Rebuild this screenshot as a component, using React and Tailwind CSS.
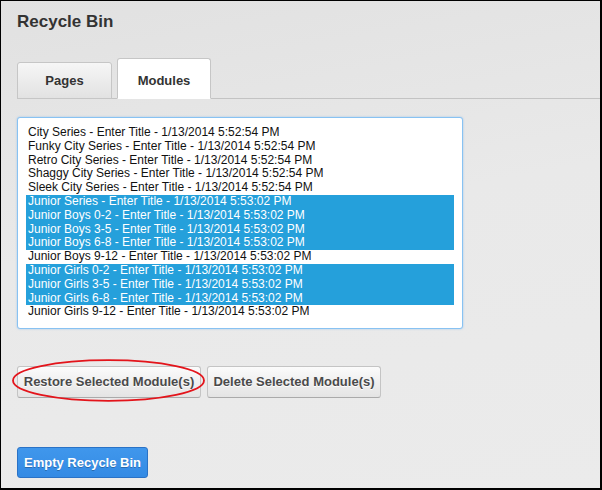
import React from "react";

const items = [
  ["City Series - Enter Title - 1/13/2014 5:52:54 PM", false],
  ["Funky City Series - Enter Title - 1/13/2014 5:52:54 PM", false],
  ["Retro City Series - Enter Title - 1/13/2014 5:52:54 PM", false],
  ["Shaggy City Series - Enter Title - 1/13/2014 5:52:54 PM", false],
  ["Sleek City Series - Enter Title - 1/13/2014 5:52:54 PM", false],
  ["Junior Series - Enter Title - 1/13/2014 5:53:02 PM", true],
  ["Junior Boys 0-2 - Enter Title - 1/13/2014 5:53:02 PM", true],
  ["Junior Boys 3-5 - Enter Title - 1/13/2014 5:53:02 PM", true],
  ["Junior Boys 6-8 - Enter Title - 1/13/2014 5:53:02 PM", true],
  ["Junior Boys 9-12 - Enter Title - 1/13/2014 5:53:02 PM", false],
  ["Junior Girls 0-2 - Enter Title - 1/13/2014 5:53:02 PM", true],
  ["Junior Girls 3-5 - Enter Title - 1/13/2014 5:53:02 PM", true],
  ["Junior Girls 6-8 - Enter Title - 1/13/2014 5:53:02 PM", true],
  ["Junior Girls 9-12 - Enter Title - 1/13/2014 5:53:02 PM", false],
];

export default function App() {
  return (
    <div
      className="relative box-border w-[602px] h-[490px] overflow-hidden border-l border-t border-r-2 border-b-2 border-black bg-[linear-gradient(170deg,#e1e1e1_0%,#e9e9e9_45%,#ebebeb_100%)] pl-[16px] font-['Liberation_Sans',Arial,sans-serif]"
    >
      <h1 className="mt-[11px] text-[17px] leading-[20px] font-bold text-[#333333]">
        Recycle Bin
      </h1>

      <div className="mt-[26px] flex h-[41px] items-end gap-[5px] border-b border-[#c3c3c3]">
        <div className="-mb-px box-border flex h-[37px] w-[95px] items-center justify-center rounded-t-[3px] border border-[#c6c6c6] bg-[linear-gradient(#f6f6f6,#e2e2e2)] text-[13px] font-bold text-[#333333]">
          Pages
        </div>
        <div className="-mb-px box-border flex h-[41px] w-[94px] items-center justify-center rounded-t-[3px] border border-b-white border-[#c6c6c6] bg-white pt-[4px] text-[13px] font-bold text-[#333333]">
          Modules
        </div>
      </div>

      <div className="mt-[18px] box-border h-[212px] w-[446px] rounded-[3px] border border-[#88c2f2] bg-white p-[8px] shadow-[0_0_2px_rgba(100,170,240,0.6)]">
        {items.map(([t, sel]) => (
          <div
            key={t}
            className={
              sel
                ? "h-[13.8px] whitespace-nowrap bg-[#25a0db] px-[2px] text-[12px] leading-[13.8px] text-white"
                : "h-[13.8px] whitespace-nowrap px-[2px] text-[12px] leading-[13.8px] text-[#111111]"
            }
          >
            {t}
          </div>
        ))}
      </div>

      <div className="mt-[37px] flex gap-[6px]">
        <div className="relative">
          <button className="box-border flex h-[32px] w-[184px] items-center justify-center rounded-[3px] border border-[#c4c4c4] border-b-[#aaaaaa] bg-[linear-gradient(#fbfbfb,#e4e4e4)] text-[13px] font-bold text-[#4a4a4a] [text-shadow:0_1px_0_#ffffff]">
            Restore Selected Module(s)
          </button>
          <svg
            className="pointer-events-none absolute left-[-5px] top-[-7px]"
            width="194"
            height="43"
            viewBox="0 0 194 43"
          >
            <ellipse
              cx="96.5"
              cy="21.5"
              rx="95.5"
              ry="20.3"
              fill="none"
              stroke="#e3141b"
              strokeWidth="1.8"
            />
          </svg>
        </div>
        <button className="box-border flex h-[32px] w-[174px] items-center justify-center rounded-[3px] border border-[#c4c4c4] border-b-[#aaaaaa] bg-[linear-gradient(#fbfbfb,#e4e4e4)] text-[13px] font-bold text-[#4a4a4a] [text-shadow:0_1px_0_#ffffff]">
          Delete Selected Module(s)
        </button>
      </div>

      <button className="mt-[49px] box-border flex h-[31px] w-[131px] items-center justify-center rounded-[3px] border border-[#2a72c6] bg-[linear-gradient(#4097ec,#338ae4)] text-[13px] font-bold text-white [text-shadow:0_1px_0_rgba(0,0,0,0.25)]">
        Empty Recycle Bin
      </button>
    </div>
  );
}
